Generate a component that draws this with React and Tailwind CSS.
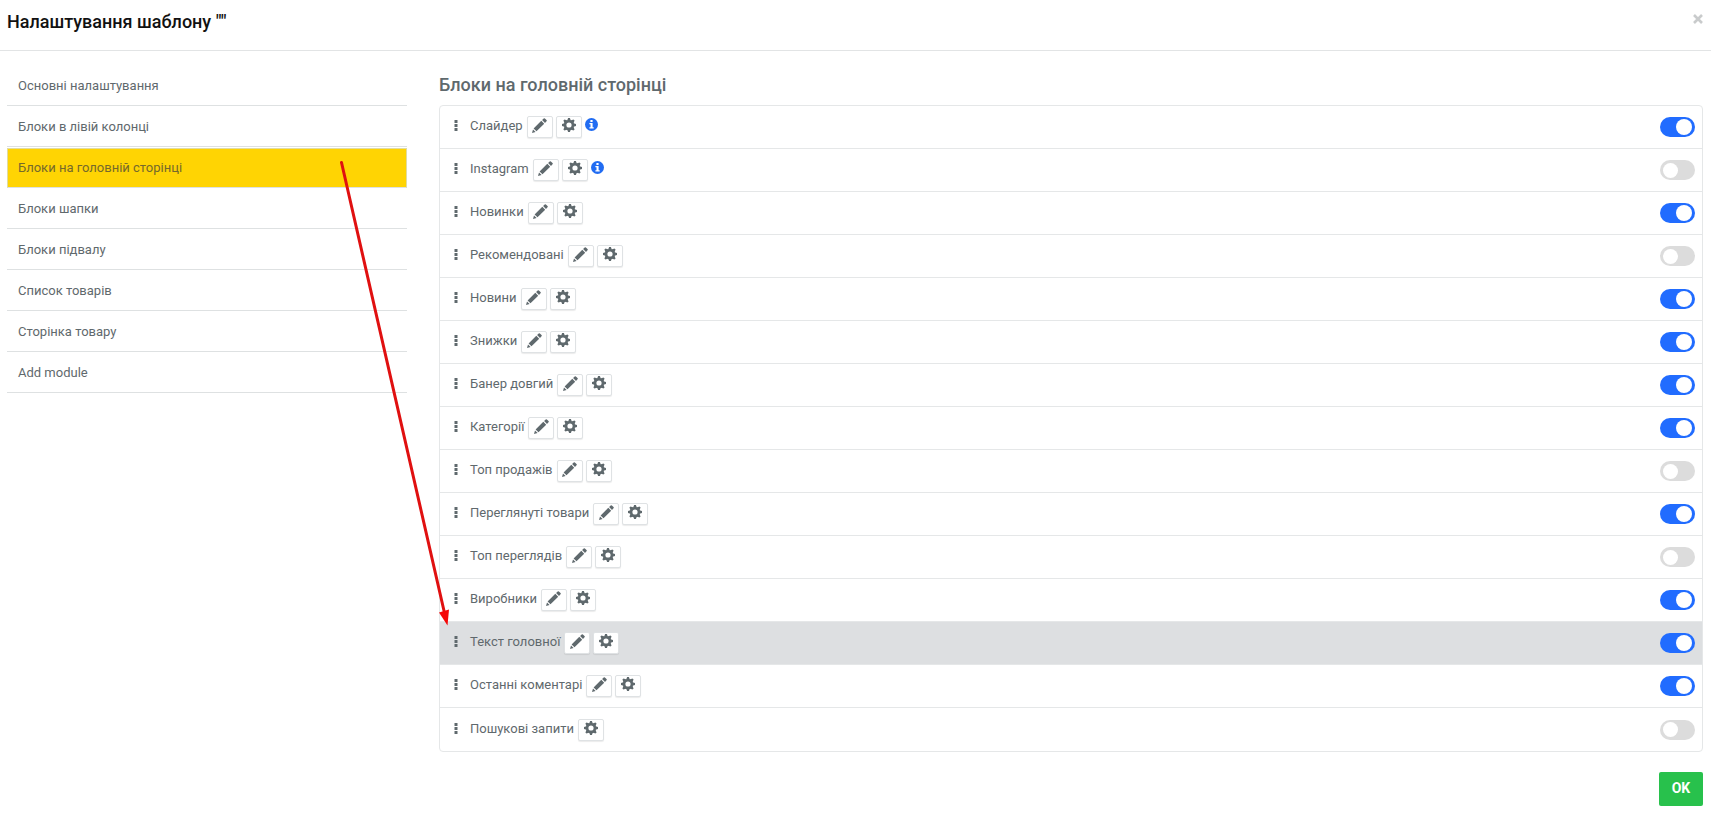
import React from "react";

const navItems = [
  "Основні налаштування",
  "Блоки в лівій колонці",
  "Блоки на головній сторінці",
  "Блоки шапки",
  "Блоки підвалу",
  "Список товарів",
  "Сторінка товару",
  "Add module",
];

const blocks = [
  { name: "Слайдер", on: true, info: true },
  { name: "Instagram", on: false, info: true },
  { name: "Новинки", on: true },
  { name: "Рекомендовані", on: false },
  { name: "Новини", on: true },
  { name: "Знижки", on: true },
  { name: "Банер довгий", on: true },
  { name: "Категорії", on: true },
  { name: "Топ продажів", on: false },
  { name: "Переглянуті товари", on: true },
  { name: "Топ переглядів", on: false },
  { name: "Виробники", on: true },
  { name: "Текст головної", on: true, highlighted: true },
  { name: "Останні коментарі", on: true },
  { name: "Пошукові запити", on: false, noEdit: true },
];

function PencilIcon() {
  return (
    <svg className="size-[15px]" viewBox="0 0 15 15" fill="currentColor" aria-hidden="true">
      <path d="M0 15l1-3.600 2.600 2.600zM1.600 10.400L9.300 2.800l2.900 2.900-7.700 7.600zM10.100 2L11.700.5q.6-.6 1.200 0l1.600 1.600q.6.6 0 1.200L13 4.900z" />
    </svg>
  );
}

function GearIcon() {
  return (
    <svg className="size-[14px]" viewBox="0 0 14 14" aria-hidden="true">
      <circle cx="7" cy="7" r="3.900" fill="none" stroke="currentColor" strokeWidth="2.600" />
      <path
        d="M6.100 0h1.800l.9 2.500H5.200zM6.100 14h1.800l.9-2.500H5.200zM0 6.100v1.800l2.500.9V5.200zM14 6.100v1.800l-2.500.9V5.200zM1.400 2.600l1.200-1.200 2.700 1.200-2.700 2.700zM12.600 2.600l-1.200-1.200-2.700 1.200 2.700 2.700zM1.400 11.400l1.200 1.200 2.700-1.200-2.700-2.700zM12.600 11.400l-1.200 1.200-2.700-1.200 2.700-2.700z"
        fill="currentColor"
      />
    </svg>
  );
}

function InfoIcon() {
  return (
    <svg className="size-[13px]" viewBox="0 0 13 13" aria-hidden="true">
      <circle cx="6.500" cy="6.500" r="6.500" fill="#216cf2" />
      <path d="M5.400 2h2.200v1.900H5.400zM4.400 5h3.200v4.300h1.100v1.300H4.400V9.300h1.100V6.300H4.400z" fill="#fff" />
    </svg>
  );
}

function DragIcon() {
  return (
    <svg className="h-[11px] w-[4px]" viewBox="0 0 4 11" fill="currentColor" aria-hidden="true">
      <path d="M.5 0h3v3h-3zM.5 4h3v3h-3zM.5 8h3v3h-3z" />
    </svg>
  );
}

function IconButton({ label, children }) {
  return (
    <button
      type="button"
      aria-label={label}
      className="flex h-[22px] w-[26px] justify-center rounded-xs border border-[#dfe2e4] bg-white pt-px shadow-[0_1px_1px_rgba(0,0,0,0.08)]"
    >
      {children}
    </button>
  );
}

function Toggle({ label, defaultChecked }) {
  return (
    <label className="flex cursor-pointer">
      <input type="checkbox" role="switch" aria-label={label} defaultChecked={defaultChecked} className="peer sr-only" />
      <span className="flex h-5 w-[35px] items-center rounded-full bg-[#dcdcdc] px-[3px] peer-checked:justify-end peer-checked:bg-[#216cff] *:size-[15px] peer-checked:*:size-4">
        <span className="rounded-full bg-white" />
      </span>
    </label>
  );
}

function Arrow() {
  return (
    <svg
      className="pointer-events-none absolute top-[158px] left-[336px] h-[470px] w-[120px]"
      viewBox="0 0 120 470"
      aria-hidden="true"
    >
      <path d="M5.500 4.500L108.500 455" stroke="#e01010" strokeWidth="3" strokeLinecap="round" fill="none" />
      <path d="M111.500 467.500L103 454.500L113 451.500Z" fill="#f50808" />
    </svg>
  );
}

export default function App() {
  return (
    <div className="relative bg-white font-[Roboto,'Liberation_Sans',sans-serif] text-[13px] leading-5 text-[#5f696d]">
      <header className="flex items-start justify-between border-b border-[#e2e4e5] pt-2 pr-2 pb-[15px] pl-[7px]">
        <h1 className="text-lg leading-[27px] font-medium text-[#111]">Налаштування шаблону ""</h1>
        <button type="button" aria-label="Закрити" className="mt-[5px] flex size-[11px] items-center justify-center text-[#c9cbcc]">
          <svg className="size-[10px]" viewBox="0 0 10 10" stroke="currentColor" strokeWidth="2.600" aria-hidden="true">
            <path d="M1 1l8 8M9 1L1 9" />
          </svg>
        </button>
      </header>

      <div className="flex gap-8 pt-[14px] pr-2 pl-[7px]">
        <nav className="w-[400px] shrink-0">
          {navItems.map((item, i) => (
            <a
              key={item}
              href="#"
              className={
                i === 2
                  ? "mt-px block h-10 border border-[#e0dca0] border-b-[#dee1e2] bg-[#ffd403] px-[10px] py-[9px] text-[#75692c]"
                  : "block h-[41px] border-b border-[#dee1e2] px-[11px] pt-[11px]"
              }
            >
              {item}
            </a>
          ))}
        </nav>

        <main className="min-w-0 flex-1">
          <h2 className="py-2 text-lg leading-6 font-medium">Блоки на головній сторінці</h2>
          <ul className="overflow-hidden rounded-sm border border-[#e5e7e8]">
            {blocks.map((b) => (
              <li
                key={b.name}
                className={
                  "flex h-[43px] items-center justify-between border-b border-[#e5e7e8] pr-[7px] pl-[14px] last:border-b-0 " +
                  (b.highlighted ? "bg-[#dddfe1]" : "")
                }
              >
                <div className="flex items-start">
                  <span className="mt-[4px] mr-3">
                    <DragIcon />
                  </span>
                  <span className="mr-1 leading-5">{b.name}</span>
                  <div className="flex gap-[3px]">
                    {!b.noEdit && (
                      <IconButton label={"Редагувати: " + b.name}>
                        <PencilIcon />
                      </IconButton>
                    )}
                    <IconButton label={"Налаштувати: " + b.name}>
                      <GearIcon />
                    </IconButton>
                    {b.info && (
                      <span className="pt-[2px]">
                        <InfoIcon />
                      </span>
                    )}
                  </div>
                </div>
                <Toggle label={b.name} defaultChecked={b.on} />
              </li>
            ))}
          </ul>
          <div className="flex justify-end pt-5">
            <button type="button" className="h-[34px] w-11 rounded-xs bg-[#28c14c] pb-0.5 text-sm font-bold text-white">
              OK
            </button>
          </div>
        </main>
      </div>
      <Arrow />
    </div>
  );
}
